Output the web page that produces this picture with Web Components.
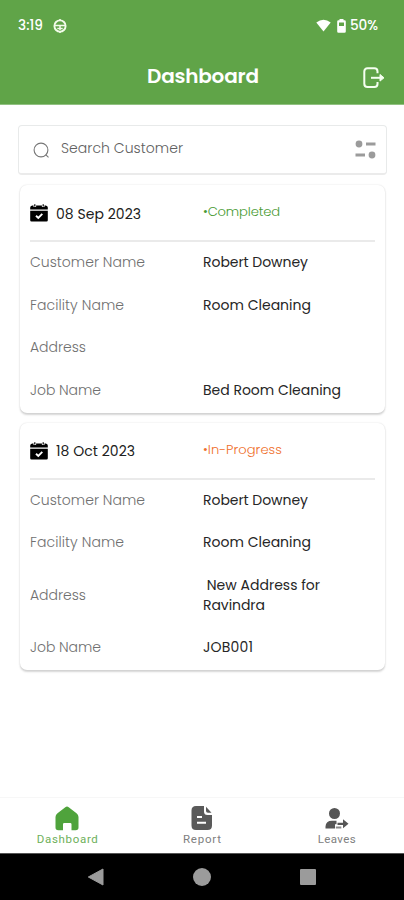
<!DOCTYPE html>
<html lang="en">
<head>
<meta charset="utf-8">
<title>Dashboard</title>
<style>
html,body{margin:0;height:100%;background:#fff}
body{font-family:Poppins,Inter,"Noto Sans",sans-serif;overflow:hidden}
</style>
</head>
<body>
<dashboard-screen></dashboard-screen>
<script>
const define = (name, html, setup) => customElements.define(name, class extends HTMLElement {
  connectedCallback() {
    if (this.shadowRoot) return;
    const t = document.createElement('template');
    t.innerHTML = html;
    this.attachShadow({mode: 'open'}).append(t.content.cloneNode(true));
    if (setup) setup(this, this.shadowRoot);
  }
});

// A single line of text, tracked so that it fills the width given in "w".
define('fit-text', `<style>
:host{display:inline-block;white-space:pre;line-height:20px}
span{display:inline-block}
</style><span><slot></slot></span>`, (el, root) => {
  const w = +el.getAttribute('w');
  const span = root.querySelector('span');
  const n = el.textContent.length;
  const gap = (w - span.getBoundingClientRect().width) / (n - 1);
  span.style.letterSpacing = gap.toFixed(3) + 'px';
  el.style.width = w + 'px';
});

define('status-bar', `<style>
:host{display:flex;height:50px;box-sizing:border-box;padding:1px 26px 0 18px;align-items:center;color:#fff;font-size:13.600px;font-weight:500}
svg{display:block}
.face{margin-left:10px}.wifi{margin-left:auto}.bat{margin:0 4px 0 6px}
</style>
<fit-text w="25">3:19</fit-text>
<svg class="face" width="14" height="14" viewBox="0 0 14 14"><circle cx="7" cy="7" r="5.600" fill="none" stroke="#f2fbe9" stroke-width="1.900"/><path d="M1.500 6.600h11M7 7v4" stroke="#f2fbe9" stroke-width="1.500"/><path d="M4.300 9.500h5.400" stroke="#f2fbe9" stroke-width="1.400"/><path d="M7 0v2M7 12v2" stroke="#f2fbe9" stroke-width="1.600"/></svg>
<svg class="wifi" width="15" height="13" viewBox="0 0 15 13"><path d="M.3 3.600Q7.500-2.300 14.700 3.600L7.500 12.500Z" fill="#fff"/></svg>
<svg class="bat" width="9" height="14" viewBox="0 0 9 14"><path fill="#fff" fill-rule="evenodd" d="M2.500 0h4v1.300h1q1.300 0 1.300 1.300v9.800q0 1.300-1.300 1.300h-6Q.2 13.700.2 12.400V2.600Q.2 1.300 1.500 1.300h1ZM2 3.500V7h5V3.500Z"/></svg>
<fit-text w="28">50%</fit-text>`);

define('app-header', `<style>
:host{display:block;background:#60a448;border-bottom:1px solid #91c181;color:#fff;box-sizing:border-box;height:105px}
.row{display:grid;grid-template-columns:1fr 112px 1fr;align-items:center;height:52px;box-sizing:border-box}
fit-text{grid-column:2;font-size:20px;font-weight:600;line-height:24px;margin-left:1px}
svg{justify-self:end;margin:4px 19px 0 0;display:block}
</style>
<status-bar></status-bar>
<div class="row"><fit-text w="112">Dashboard</fit-text>
<svg width="22" height="22" viewBox="0 0 22 22" fill="none" stroke="#f5fff0" stroke-width="2"><path d="M14.500 6.300V4.400Q14.500 1.300 11.400 1.300H4.600Q1.300 1.300 1.300 4.600v12.200q0 3.300 3.300 3.300h6.800q3.100 0 3.100-3.100v-2"/><path d="M8 10.800h10"/><path d="M17 7.500 21 10.800 17 14.100Z" fill="#f5fff0" stroke-width="1"/></svg></div>`);

define('search-box', `<style>
:host{display:flex;align-items:center;height:50px;box-sizing:border-box;border:1.500px solid #e8eaea;border-bottom:2px solid #ebebeb;border-radius:4px;padding:0 10px 0 14px;color:#606060;font-size:14px;font-weight:300;background:#fff}
fit-text{margin:-3px auto 0 11px}
svg{display:block}
</style>
<svg width="17" height="18" viewBox="0 0 17 18" fill="none" stroke="#777" stroke-width="1.100"><circle cx="8" cy="9" r="6.900"/><path d="m12.700 13.700 2.800 2.700"/></svg>
<fit-text w="122">Search Customer</fit-text>
<svg width="21" height="19" viewBox="0 0 21 19" fill="#9b9b9b"><circle cx="4" cy="4" r="3.400"/><path d="M11 2.500h9.500v3H11zM.5 13.500H10v3H.5z"/><circle cx="17" cy="15" r="3.400"/></svg>`);

define('calendar-icon', `<style>:host{display:block}svg{display:block}</style>
<svg width="18" height="18" viewBox="0 0 18 18"><path d="M2.200 1.500h1.300v1.600h2.600V1.500h5.800v1.600h2.600V1.500h1.300Q17.800 1.800 17.800 3.600V5.600H.2V3.600Q.2 1.800 2.200 1.500Z"/><path d="M4.200.2h1.200V2.500H4.200zM12.600.2h1.200V2.500h-1.200z"/><path d="M.2 6.800h17.600v9.500q0 1.300-1.300 1.300H1.500q-1.300 0-1.300-1.300Z"/><path d="m6 11.700 2.300 2.200 4-4" fill="none" stroke="#fff" stroke-width="1.900"/></svg>`);

define('job-card', `<style>
:host{display:block;box-sizing:border-box;background:#fff;border-radius:7px;padding:0 10px 0;box-shadow:0 1.500px 2px rgba(0,0,0,.16),0 0 2px rgba(0,0,0,.1)}
header{display:grid;grid-template-columns:18px 155px 1fr;align-items:center;height:57px;box-sizing:border-box;border-bottom:2px solid #eaeaea;font-size:14px;color:#202020}
calendar-icon{margin-top:1px}
::slotted([slot=date]){margin-left:8px;margin-top:2px}
::slotted([slot=status]){margin-top:-1px}
</style>
<header><calendar-icon></calendar-icon><slot name="date"></slot><slot name="status"></slot></header><slot></slot>`);

define('job-field', `<style>
:host{display:grid;grid-template-columns:173px 1fr;align-items:center;height:42.800px;box-sizing:border-box;padding-bottom:3px;font-size:14px;color:#262626}
:host([tall]){height:62px}
::slotted([slot=label]){color:#707070;font-weight:300}
.v{display:flex;flex-direction:column;align-items:flex-start}
</style><slot name="label"></slot><div class="v"><slot></slot></div>`);

define('nav-item', `<style>
:host{display:flex;flex-direction:column;align-items:center;font:11.500px Roboto,sans-serif;color:#808080;padding-top:7px}
:host([active]){color:#6db05a}
.i{height:26px;display:flex;align-items:center}
</style><div class="i"><slot name="icon"></slot></div><slot></slot>`);

define('bottom-nav', `<style>
:host{display:grid;grid-template-columns:repeat(3,1fr);height:56px;box-sizing:border-box;border-top:1px solid #f7f7f7;background:#fff}
svg{display:block}
fit-text{line-height:16px}
</style>
<nav-item active><svg slot="icon" width="24" height="25" viewBox="0 0 24 25"><path fill="#4fa33c" d="M10.300 1.200Q12 0 13.700 1.200L21.500 7.300Q23.500 8.800 23.500 11v10.500q0 2.800-2.800 2.800h-4.200v-6Q16.500 17 15.200 17H9.200Q8 17 8 18.300v6H3.300Q.5 24.300.5 21.500V11Q.5 8.800 2.500 7.300Z"/></svg><fit-text w="61">Dashboard</fit-text></nav-item>
<nav-item><svg slot="icon" width="22" height="24" viewBox="0 0 22 24"><path fill="#5a5a5a" d="M5 0h8v5.500Q13 9 16.500 9H21v10.500q0 4.500-4.500 4.500H5Q.5 24 .5 19.500v-15Q.5 0 5 0ZM15 .7 20.500 6.800H17Q15 6.800 15 5Z"/><path d="M6 11h5M6 16.700h9" stroke="#fff" stroke-width="2"/></svg><fit-text w="38">Report</fit-text></nav-item>
<nav-item><svg slot="icon" width="24" height="21" viewBox="0 0 24 21"><g fill="#555"><circle cx="9.500" cy="5.500" r="5.500"/><path d="M.5 20.500v-2Q.8 12.700 7 12.700h4.500v3.600H10v4.200Z"/><path d="M12.500 14.700H18v-3.500l5.500 4.600-5.500 4.500v-3.200h-5.500z"/></g><path d="M10.800 18.500h5.500v2h-5.500z" fill="#888"/></svg><fit-text w="38">Leaves</fit-text></nav-item>`);

define('system-nav', `<style>
:host{display:grid;grid-template-columns:repeat(3,106px);justify-content:center;justify-items:center;align-items:center;height:47px;background:#000;border-top:1px solid #555;box-sizing:border-box}
svg{display:block}
</style>
<svg width="18" height="18" viewBox="0 0 18 18"><path d="M16 1v16L1.300 9Z" fill="#9b9b9b" stroke="#9b9b9b" stroke-linejoin="round"/></svg>
<svg width="18" height="18" viewBox="0 0 18 18"><circle cx="9" cy="9" r="9" fill="#9b9b9b"/></svg>
<svg width="16" height="16" viewBox="0 0 16 16"><rect width="16" height="16" rx="1" fill="#9b9b9b"/></svg>`);

define('dashboard-screen', `<style>
:host{display:flex;flex-direction:column;width:404px;height:900px;background:#fff}
main{flex:1;padding:20px 17px 0 18px;min-height:0}
section{display:flex;flex-direction:column;gap:9.500px;padding:10px 2px 0 2px}
.done{color:#489a32;font-size:13.100px;font-weight:300}.busy{color:#ef6f2c;font-size:13.100px;font-weight:300}
</style>
<app-header></app-header>
<main><search-box></search-box>
<section>
<job-card><fit-text slot="date" w="85">08 Sep 2023</fit-text><fit-text slot="status" class="done" w="77">•Completed</fit-text>
<job-field><fit-text slot="label" w="115">Customer Name</fit-text><fit-text w="105">Robert Downey</fit-text></job-field>
<job-field><fit-text slot="label" w="94">Facility Name</fit-text><fit-text w="108">Room Cleaning</fit-text></job-field>
<job-field><fit-text slot="label" w="56">Address</fit-text></job-field>
<job-field><fit-text slot="label" w="71">Job Name</fit-text><fit-text w="138">Bed Room Cleaning</fit-text></job-field>
</job-card>
<job-card><fit-text slot="date" w="79">18 Oct 2023</fit-text><fit-text slot="status" class="busy" w="79">•In-Progress</fit-text>
<job-field><fit-text slot="label" w="115">Customer Name</fit-text><fit-text w="105">Robert Downey</fit-text></job-field>
<job-field><fit-text slot="label" w="94">Facility Name</fit-text><fit-text w="108">Room Cleaning</fit-text></job-field>
<job-field tall><fit-text slot="label" w="56">Address</fit-text><fit-text w="117"> New Address for</fit-text><fit-text w="62">Ravindra</fit-text></job-field>
<job-field><fit-text slot="label" w="71">Job Name</fit-text><fit-text w="50">JOB001</fit-text></job-field>
</job-card>
</section></main>
<bottom-nav></bottom-nav>
<system-nav></system-nav>`);
</script>
</body>
</html>
